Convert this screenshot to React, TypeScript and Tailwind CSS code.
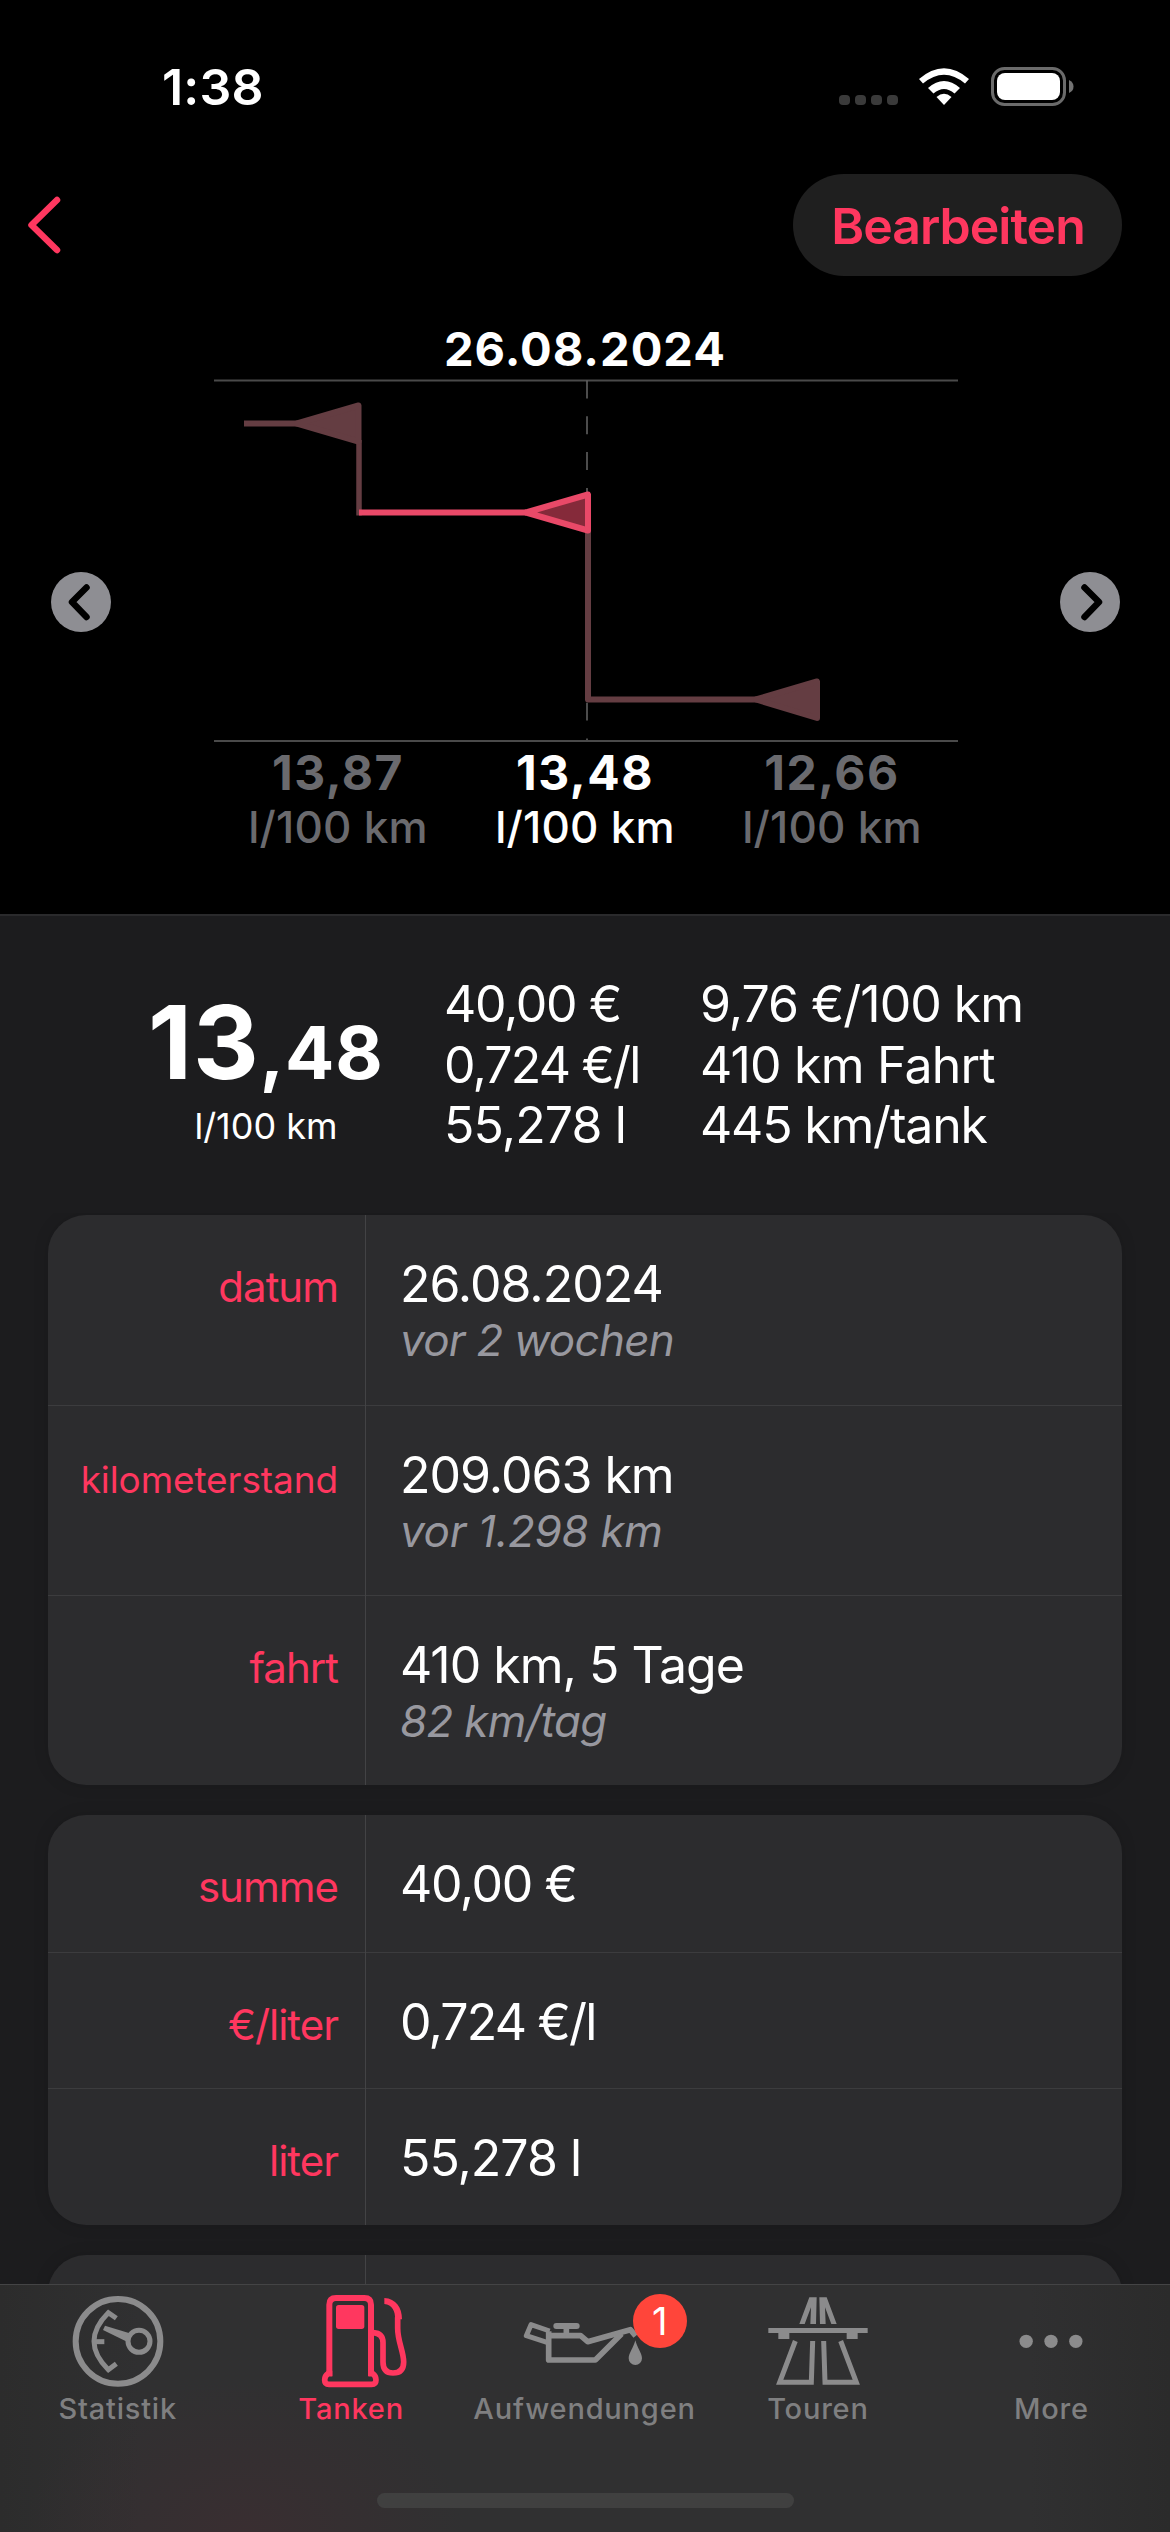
import type { ReactNode } from "react";

type Entry = {
  label: string;
  value: string;
  note?: string;
  labelClass?: string;
  valueClass?: string;
  noteClass?: string;
};

const tripRows: Entry[] = [
  { label: "datum", value: "26.08.2024", note: "vor 2 wochen" },
  {
    label: "kilometerstand",
    value: "209.063 km",
    note: "vor 1.298 km",
    labelClass: "text-[37px] tracking-[-0.1px]",
    noteClass: "tracking-[-0.3px]",
  },
  { label: "fahrt", value: "410 km, 5 Tage", note: "82 km/tag" },
];

const priceRows: Entry[] = [
  { label: "summe", value: "40,00 €", valueClass: "tracking-[-1.400px]" },
  { label: "€/liter", value: "0,724 €/l", valueClass: "tracking-[-1.800px]" },
  { label: "liter", value: "55,278 l" },
];

function StatusBar() {
  return (
    <div className="flex h-[174px] items-start justify-between pt-[62px] pr-[96px] pl-[162px]">
      <span className="text-[50px] leading-[50px] font-semibold tracking-[0.200px]">
        1:38
      </span>
      <svg width="236" height="40" viewBox="838 66 236 40" className="mt-1">
        <g fill="#3a3a3a">
          <rect x="839" y="95" width="11" height="10" rx="4" />
          <rect x="855" y="95" width="11" height="10" rx="4" />
          <rect x="871" y="95" width="11" height="10" rx="4" />
          <rect x="887" y="95" width="11" height="10" rx="4" />
        </g>
        <g fill="#fff">
          <path d="M919 79 Q944 57.500 969 79 L965 83.500 Q944 66 923 83.500 Z" />
          <path d="M928 88 Q944 74 960 88 L954.500 93.500 Q944 84.500 933.500 93.500 Z" />
          <path d="M936.500 97 Q944 90.500 951.500 97 L944 105 Z" />
          <rect x="997" y="73" width="63" height="27" rx="8" />
          <path d="M1069 80 Q1073.500 82 1073.500 86.500 Q1073.500 91 1069 93 Z" opacity="0.45" />
        </g>
        <rect x="992.500" y="68.500" width="72" height="36" rx="12" fill="none" stroke="#6b6b6b" strokeWidth="3" />
      </svg>
    </div>
  );
}

function NavBar() {
  return (
    <div className="flex h-[102px] items-center justify-between pr-[48px] pl-[27px]">
      <svg width="34" height="58" viewBox="0 0 34 58" fill="none" stroke="#ff375f" strokeWidth="6.500" strokeLinecap="round" strokeLinejoin="round">
        <path d="M30 4 L4.500 29 L30 54" />
      </svg>
      <button className="h-[102px] w-[329px] rounded-full bg-[#1f1f1f] pt-[2px] pl-[1px] text-[50px] font-semibold tracking-[-1px] text-[#ff375f]">
        Bearbeiten
      </button>
    </div>
  );
}

function ArrowButton({ next }: { next?: boolean }) {
  return (
    <svg width="60" height="60" viewBox="0 0 60 60" className={next ? "-scale-x-100" : ""}>
      <circle cx="30" cy="30" r="30" fill="#8e8e93" />
      <path d="M35.500 15.500 L21 30 L35.500 45" fill="none" stroke="#000" strokeWidth="6.500" strokeLinecap="round" strokeLinejoin="round" />
    </svg>
  );
}

function Chart() {
  return (
    <svg width="744" height="364" viewBox="214 379 744 364" fill="none" className="mb-[82px]">
      <path d="M214 380.500 H958 M214 741 H958" stroke="#4a4a4a" strokeWidth="2" />
      <path d="M587 380.500 V740" stroke="#666" strokeWidth="1.500" strokeDasharray="17.900" />
      <g stroke="#643d42" strokeWidth="6" strokeLinejoin="round">
        <path d="M244 423.500 H300" />
        <path d="M359 440 V515.500" strokeWidth="5.500" />
        <path d="M297 423.500 L358.500 405.500 V441.500 Z" fill="#643d42" />
        <path d="M588 530 V699.500 H758" />
        <path d="M756 699.500 L817 681.500 V718 Z" fill="#643d42" />
      </g>
      <g stroke="#e94968" strokeWidth="6" strokeLinejoin="round">
        <path d="M359 512.500 H526" />
        <path d="M526 512.500 L588 494.500 V530.500 Z" fill="#852a3a" />
      </g>
    </svg>
  );
}

function Consumption({ value, active }: { value: string; active?: boolean }) {
  return (
    <div className={active ? "w-[247px] text-white" : "w-[247px] text-[#6a6a6e]"}>
      <p className="text-[48px] leading-[54px] font-bold tracking-[1.500px]">{value}</p>
      <p className="text-[44px] leading-[54px] font-medium tracking-[0.200px]">l/100 km</p>
    </div>
  );
}

function Summary() {
  return (
    <div className="flex h-[299px] border-t-2 border-[#2a2a2c] pl-[148px]">
      <div className="w-[296px] pt-[76px]">
        <p className="text-[102px] leading-[100px] font-bold tracking-[1px]">
          13<span className="text-[73px] leading-none tracking-[0.800px]">,48</span>
        </p>
        <p className="mt-3 w-[236px] text-center text-[36px] leading-[44px]">
          l/100 km
        </p>
      </div>
      <div className="w-[256px] pt-[58px] text-[50px] leading-[60.500px]">
        <p className="tracking-[-1.300px]">40,00 €</p>
        <p className="tracking-[-1.800px]">0,724 €/l</p>
        <p className="tracking-[-0.900px]">55,278 l</p>
      </div>
      <div className="pt-[58px] text-[50px] leading-[60.500px]">
        <p className="tracking-[-1px]">9,76 €/100 km</p>
        <p className="tracking-[-0.800px]">410 km Fahrt</p>
        <p className="tracking-[-1.200px]">445 km/tank</p>
      </div>
    </div>
  );
}

function Card({ rows, rowClass }: { rows: Entry[]; rowClass: string }) {
  return (
    <div className="relative rounded-[38px] bg-[#2c2c2e] shadow-[0_0_16px_rgba(0,0,0,0.12)]">
      {rows.map((row) => (
        <div key={row.label} className={`flex items-baseline border-[#3c3c3e] not-first:border-t ${rowClass}`}>
          <p className={`w-[290px] text-right text-[#ff375f] ${row.labelClass ?? "text-[42px] tracking-[-1px]"}`}>
            {row.label}
          </p>
          <div className="ml-[62px]">
            <p className={`text-[50px] leading-[58px] ${row.valueClass ?? "tracking-[-1px]"}`}>
              {row.value}
            </p>
            {row.note && (
              <p className={`text-[44px] leading-[54px] text-[#98989f] italic ${row.noteClass ?? "tracking-[-0.700px]"}`}>
                {row.note}
              </p>
            )}
          </div>
        </div>
      ))}
      <div className="absolute inset-y-0 left-[317px] w-px bg-[#434345]" />
    </div>
  );
}

function GaugeIcon() {
  return (
    <svg width="92" height="95" viewBox="215 192 276 285" fill="none" stroke="currentColor" strokeWidth="15">
      <circle cx="353" cy="334" r="127" strokeWidth="18" />
      <path d="M348 265 L324 248 Q238 334 324 419 L348 401" />
      <path d="M281 335 H312" />
      <circle cx="416" cy="334" r="33" />
      <path d="M314 287 L388 310 L377 334 L308 300 Z" fill="currentColor" stroke="none" />
    </svg>
  );
}

function PumpIcon() {
  return (
    <svg width="114" height="95" viewBox="882 192 342 285" fill="none" stroke="currentColor" strokeWidth="17">
      <path d="M988 438 V224 Q988 204 1008 204 H1093 Q1113 204 1113 224 V438" strokeWidth="18" />
      <path d="M997 431 H984 Q974 438 974 450 Q974 463 987 463 H1115 Q1128 463 1128 450 Q1128 438 1118 431 H1105" />
      <rect x="1008" y="225" width="85" height="72" rx="8" fill="currentColor" stroke="none" />
      <path d="M1120 308 Q1149 310 1149 338 V396 Q1149 429 1179 429 Q1211 429 1211 396 C1211 365 1193 335 1193 295 V262" />
      <path d="M1153 204 C1188 206 1206 232 1206 268 H1185 C1187 245 1176 224 1153 222 Z" fill="currentColor" stroke="none" />
    </svg>
  );
}

function OilIcon() {
  return (
    <svg width="123" height="95" viewBox="310 192 369 285" fill="none" stroke="currentColor" strokeWidth="17" strokeLinejoin="round">
      <path d="M387 317 H483 L504 335 L632 299 L648 318" />
      <path d="M387 304 V390 H527 L606 311" />
      <path d="M390 303 L334 284 L320 317 L382 337" strokeWidth="15" />
      <rect x="401" y="279" width="79" height="18" rx="9" fill="currentColor" stroke="none" />
      <path d="M440 290 V317" />
      <path d="M647 331 C652 352 667 370 667 385 A20 20 0 0 1 627 385 C627 370 642 352 647 331 Z" fill="currentColor" stroke="none" />
    </svg>
  );
}

function MotorwayIcon() {
  return (
    <svg width="102" height="95" viewBox="80 192 306 285" fill="currentColor">
      <path d="M207 202 H229 L227 282 H210 L212 232 L193 282 H177 Z" />
      <path d="M259 202 H237 L239 282 H256 L254 232 L273 282 H289 Z" />
      <path d="M84 294 H382 V309 H352 V327 H319 V309 H147 V327 H114 V309 H84 Z" />
      <path d="M165 333 L118 457 H213 L217 333 M301 333 L348 457 H254 L250 333" fill="none" stroke="currentColor" strokeWidth="15" />
    </svg>
  );
}

function MoreIcon() {
  return (
    <svg width="66" height="95" viewBox="835.500 192 198 285" fill="currentColor">
      <circle cx="860" cy="334" r="20" />
      <circle cx="934.500" cy="334" r="20" />
      <circle cx="1009" cy="334" r="20" />
    </svg>
  );
}

function Tab({
  label,
  icon,
  active,
  badge,
}: {
  label: string;
  icon: ReactNode;
  active?: boolean;
  badge?: string;
}) {
  return (
    <div className="relative flex flex-1 flex-col items-center">
      <div className={active ? "text-[#ff375f]" : "text-[#8b8b8c]"}>{icon}</div>
      <span
        className={`mt-[2px] text-[29px] leading-[36px] font-medium tracking-[0.800px] ${
          active ? "text-[#ff375f]" : "text-[#7f7f80]"
        }`}
      >
        {label}
      </span>
      {badge && (
        <span className="absolute top-0 left-[165px] flex size-[54px] items-center justify-center rounded-full bg-[#ff453a] text-[38px] text-white">
          {badge}
        </span>
      )}
    </div>
  );
}

function TabBar() {
  return (
    <div className="flex h-[248px] flex-col justify-between border-t border-[#444445] bg-[radial-gradient(ellipse_220px_150px_at_245px_100%,#392e31,transparent),linear-gradient(90deg,#2c2c2c,#303031_12%,#303031_88%,#2b2b2b)]">
      <div className="flex pt-[9px] pr-[2px] pl-px">
        <Tab label="Statistik" icon={<GaugeIcon />} />
        <Tab label="Tanken" icon={<PumpIcon />} active />
        <Tab label="Aufwendungen" icon={<OilIcon />} badge="1" />
        <Tab label="Touren" icon={<MotorwayIcon />} />
        <Tab label="More" icon={<MoreIcon />} />
      </div>
      <div className="mx-auto mb-[24px] h-[15px] w-[417px] rounded-full bg-[#404040]" />
    </div>
  );
}

function App() {
  return (
    <main className="flex h-[2532px] w-[1170px] flex-col overflow-hidden bg-[#1c1c1e] font-['Inter',sans-serif] text-white">
      <header className="h-[914px] shrink-0 bg-black">
        <StatusBar />
        <NavBar />
        <p className="mt-[48px] text-center text-[47px] leading-[50px] font-bold tracking-[1px]">
          26.08.2024
        </p>
        <div className="mt-[5px] -mb-[79px] flex items-center justify-between pr-[50px] pl-[51px]">
          <ArrowButton />
          <Chart />
          <ArrowButton next />
        </div>
        <div className="flex justify-center text-center">
          <Consumption value="13,87" />
          <Consumption value="13,48" active />
          <Consumption value="12,66" />
        </div>
      </header>

      <Summary />

      <section className="min-h-0 flex-1 space-y-[30px] overflow-hidden px-[48px] pt-[2px]">
        <Card rows={tripRows} rowClass="h-[190px] pt-[40px]" />
        <Card rows={priceRows} rowClass="h-[136.500px] pt-[40px]" />
        <Card rows={[{ label: "", value: "" }]} rowClass="h-[136px]" />
      </section>

      <TabBar />
    </main>
  );
}

export default App;
